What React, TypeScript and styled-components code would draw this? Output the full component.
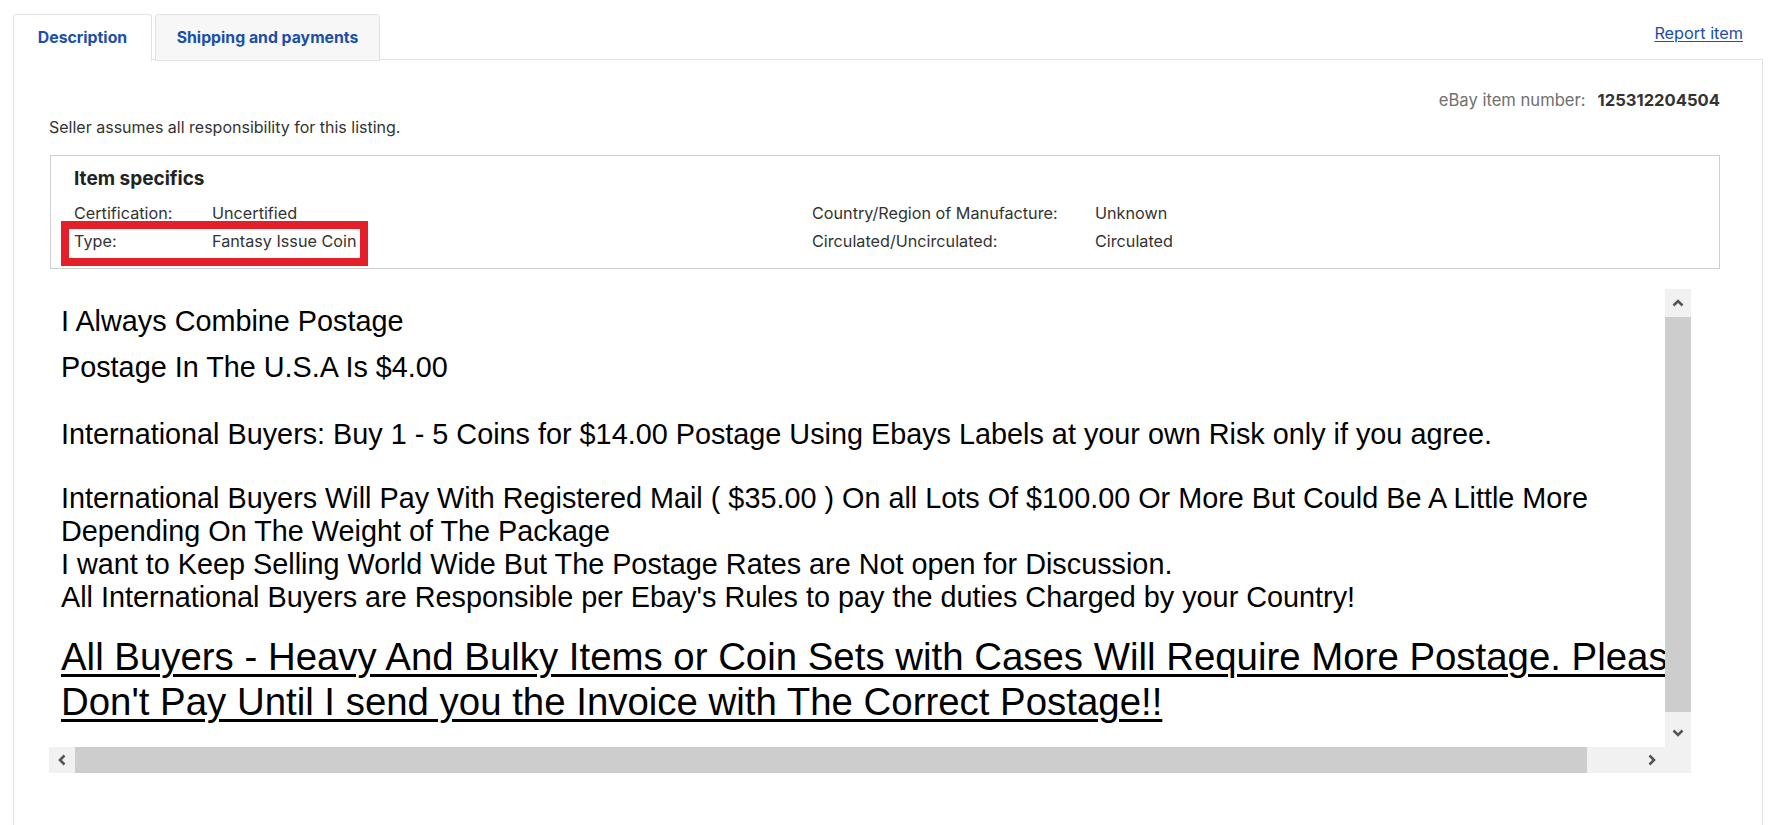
import React from "react";
import styled, { createGlobalStyle } from "styled-components";

const Global = createGlobalStyle`
  html, body { margin: 0; padding: 0; background: #fff; }
  body { font-family: Inter, "Open Sans", "Liberation Sans", sans-serif; color: #333; }
  * { box-sizing: border-box; }
`;

const Page = styled.div`
  padding: 14px 8px 0 13px;
  width: 1771px;
  height: 825px;
  overflow: hidden;
`;

const Header = styled.div`
  display: flex;
  align-items: flex-end;
  justify-content: space-between;
  height: 46px;
`;

const Tabs = styled.div`
  display: flex;
  gap: 3px;
  height: 46px;
`;

const Tab = styled.div<{ $active?: boolean; $w: number }>`
  width: ${(p) => p.$w}px;
  height: 47px;
  display: flex;
  align-items: center;
  justify-content: center;
  font-size: 15.8px;
  font-weight: 700;
  color: #1b4fa8;
  border: 1px solid #e2e2e2;
  border-bottom: ${(p) => (p.$active ? "none" : "1px solid #e2e2e2")};
  border-radius: 3px 3px 0 0;
  background: ${(p) => (p.$active ? "#fff" : "#f7f7f7")};
  position: relative;
  z-index: ${(p) => (p.$active ? 2 : 0)};
  padding-bottom: ${(p) => (p.$active ? "1px" : "0")};
`;

const ReportLink = styled.a`
  align-self: flex-start;
  margin-top: 9px;
  margin-right: 20px;
  font-size: 16.3px;
  color: #1b4fa8;
  text-decoration: underline;
  text-underline-offset: 2px;
`;

const Panel = styled.div`
  border: 1px solid #e2e2e2;
  margin-top: -1px;
  height: 800px;
  padding: 28px 42px 0 35px;
`;

const ItemNumberRow = styled.div`
  display: flex;
  justify-content: flex-end;
  align-items: center;
  gap: 12px;
  height: 24px;
  font-size: 16.6px;
`;

const ItemNumberLabel = styled.span`
  color: #707070;
`;

const ItemNumberValue = styled.span`
  font-weight: 700;
  color: #333;
`;

const SellerNote = styled.div`
  margin-top: 3px;
  height: 24px;
  line-height: 24px;
  font-size: 16px;
  color: #333;
`;

const SpecsBox = styled.div`
  position: relative;
  margin-top: 16px;
  margin-left: 1px;
  border: 1px solid #cfcfcf;
  height: 114px;
  padding: 11px 0 12px 23px;
`;

const SpecsTitle = styled.div`
  height: 24px;
  line-height: 24px;
  font-size: 19px;
  font-weight: 700;
  color: #222;
  margin-bottom: 8px;
`;

const SpecsGrid = styled.div`
  display: grid;
  grid-template-columns: 138px 600px 283px 1fr;
  grid-auto-rows: 28px;
  align-items: center;
  font-size: 16.2px;
  color: #333;
`;

const SpecCell = styled.div``;

const Highlight = styled.div`
  position: absolute;
  left: 10px;
  top: 65px;
  width: 307px;
  height: 45px;
  border: 8px solid #e3202a;
  pointer-events: none;
`;

const Frame = styled.div`
  margin-top: 20px;
  display: grid;
  grid-template-columns: 1616px 26px;
  grid-template-rows: 458px 26px;
  width: 1642px;
`;

const Viewport = styled.div`
  overflow: hidden;
  padding: 9px 0 0 12px;
  font-family: "Liberation Sans", Arial, sans-serif;
  color: #000;
  white-space: nowrap;
`;

const Line = styled.div<{ $size: number; $lh: number; $mt?: number; $u?: boolean }>`
  font-size: ${(p) => p.$size}px;
  line-height: ${(p) => p.$lh}px;
  margin-top: ${(p) => p.$mt ?? 0}px;
  text-decoration: ${(p) => (p.$u ? "underline" : "none")};
  text-decoration-thickness: 3px;
  text-underline-offset: 4px;
`;

const VBar = styled.div`
  display: flex;
  flex-direction: column;
  background: #f1f1f1;
`;

const HBar = styled.div`
  display: flex;
  background: #f1f1f1;
`;

const Corner = styled.div`
  background: #f1f1f1;
`;

const ArrowBtn = styled.div<{ $len: number; $vertical?: boolean }>`
  flex: none;
  ${(p) => (p.$vertical ? `height: ${p.$len}px;` : `width: ${p.$len}px;`)}
  display: flex;
  align-items: center;
  justify-content: center;
`;

const Thumb = styled.div<{ $len: number; $vertical?: boolean }>`
  flex: none;
  background: #cdcdcd;
  ${(p) => (p.$vertical ? `height: ${p.$len}px;` : `width: ${p.$len}px;`)}
`;

const Spacer = styled.div`
  flex: 1;
`;

const Chevron = ({ dir }: { dir: "up" | "down" | "left" | "right" }) => {
  const rot = { up: 0, right: 90, down: 180, left: 270 }[dir];
  return (
    <svg width="12" height="12" viewBox="0 0 12 12" style={{ transform: `rotate(${rot}deg)` }}>
      <polyline points="1.5,8.5 6,4 10.5,8.5" fill="none" stroke="#555" strokeWidth="2.6" />
    </svg>
  );
};

export default function App() {
  return (
    <>
      <Global />
      <Page>
        <Header>
          <Tabs>
            <Tab $active $w={139}>Description</Tab>
            <Tab $w={225}>Shipping and payments</Tab>
          </Tabs>
          <ReportLink href="#">Report item</ReportLink>
        </Header>
        <Panel>
          <ItemNumberRow>
            <ItemNumberLabel>eBay item number:</ItemNumberLabel>
            <ItemNumberValue>125312204504</ItemNumberValue>
          </ItemNumberRow>
          <SellerNote>Seller assumes all responsibility for this listing.</SellerNote>
          <SpecsBox>
            <SpecsTitle>Item specifics</SpecsTitle>
            <SpecsGrid>
              <SpecCell>Certification:</SpecCell>
              <SpecCell>Uncertified</SpecCell>
              <SpecCell>Country/Region of Manufacture:</SpecCell>
              <SpecCell>Unknown</SpecCell>
              <SpecCell>Type:</SpecCell>
              <SpecCell>Fantasy Issue Coin</SpecCell>
              <SpecCell>Circulated/Uncirculated:</SpecCell>
              <SpecCell>Circulated</SpecCell>
            </SpecsGrid>
            <Highlight />
          </SpecsBox>
          <Frame>
            <Viewport>
              <Line $size={28.8} $lh={46}>I Always Combine Postage</Line>
              <Line $size={28.8} $lh={46}>Postage In The U.S.A Is $4.00</Line>
              <Line $size={28.8} $lh={46} $mt={21}>
                International Buyers: Buy 1 - 5 Coins for $14.00 Postage Using Ebays Labels at your own Risk only if you agree.
              </Line>
              <Line $size={28.8} $lh={33} $mt={25}>
                International Buyers Will Pay With Registered Mail ( $35.00 ) On all Lots Of $100.00 Or More But Could Be A Little More
              </Line>
              <Line $size={28.8} $lh={33}>Depending On The Weight of The Package</Line>
              <Line $size={28.8} $lh={33}>I want to Keep Selling World Wide But The Postage Rates are Not open for Discussion.</Line>
              <Line $size={28.8} $lh={33}>All International Buyers are Responsible per Ebay's Rules to pay the duties Charged by your Country!</Line>
              <Line $size={38.4} $lh={45} $mt={20} $u>
                All Buyers - Heavy And Bulky Items or Coin Sets with Cases Will Require More Postage. Please
              </Line>
              <Line $size={38.4} $lh={45} $u>Don't Pay Until I send you the Invoice with The Correct Postage!!</Line>
            </Viewport>
            <VBar>
              <ArrowBtn $vertical $len={28}><Chevron dir="up" /></ArrowBtn>
              <Thumb $vertical $len={395} />
              <Spacer />
              <ArrowBtn $vertical $len={28}><Chevron dir="down" /></ArrowBtn>
            </VBar>
            <HBar>
              <ArrowBtn $len={26}><Chevron dir="left" /></ArrowBtn>
              <Thumb $len={1512} />
              <Spacer />
              <ArrowBtn $len={26}><Chevron dir="right" /></ArrowBtn>
            </HBar>
            <Corner />
          </Frame>
        </Panel>
      </Page>
    </>
  );
}
